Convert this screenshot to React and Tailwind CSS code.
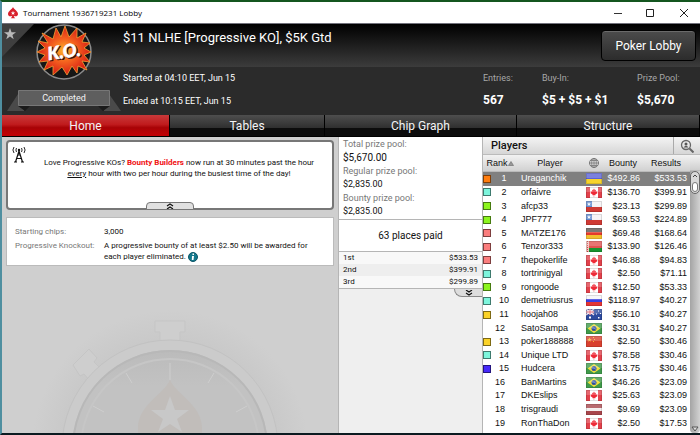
import React, { useState } from "react";

const tabs = ["Home", "Tables", "Chip Graph", "Structure"];

const payouts = [
  { place: "1st", prize: "$533.53" },
  { place: "2nd", prize: "$399.91" },
  { place: "3rd", prize: "$299.89" },
];

const pools = [
  { label: "Total prize pool:", value: "$5,670.00", size: "text-[10px]" },
  { label: "Regular prize pool:", value: "$2,835.00", size: "text-[9px]" },
  { label: "Bounty prize pool:", value: "$2,835.00", size: "text-[9px]" },
];

const players = [
  { name: "Uraganchik", flag: "ua", bounty: "$492.86", result: "$533.53", mark: "bg-[#ff7d0f]" },
  { name: "orfaivre", flag: "ca", bounty: "$136.70", result: "$399.91", mark: "bg-[#7df5dc]" },
  { name: "afcp33", flag: "cl", bounty: "$23.13", result: "$299.89", mark: "bg-[#8cf51e]" },
  { name: "JPF777", flag: "cl", bounty: "$69.53", result: "$224.89", mark: "bg-[#8cf51e]" },
  { name: "MATZE176", flag: "de", bounty: "$69.48", result: "$168.64", mark: "bg-[#fa7d7d]" },
  { name: "Tenzor333", flag: "by", bounty: "$133.90", result: "$126.46", mark: "bg-[#fa7d7d]" },
  { name: "thepokerlife", flag: "ca", bounty: "$46.88", result: "$94.83", mark: "bg-[#fa7d7d]" },
  { name: "tortrinigyal", flag: "ca", bounty: "$2.50", result: "$71.11", mark: "bg-[#7df5dc]" },
  { name: "rongoode", flag: "ca", bounty: "$12.50", result: "$53.33", mark: "bg-[#8cf51e]" },
  { name: "demetriusrus", flag: "ru", bounty: "$118.97", result: "$40.27", mark: "bg-[#7df5dc]" },
  { name: "hoojah08", flag: "au", bounty: "$56.10", result: "$40.27", mark: "bg-[#fad228]" },
  { name: "SatoSampa", flag: "br", bounty: "$30.31", result: "$40.27" },
  { name: "poker188888", flag: "cn", bounty: "$2.50", result: "$30.46", mark: "bg-[#fad228]" },
  { name: "Unique LTD", flag: "ca", bounty: "$78.58", result: "$30.46", mark: "bg-[#7df5dc]" },
  { name: "Hudcera", flag: "br", bounty: "$13.75", result: "$30.46", mark: "bg-[#4628fa]" },
  { name: "BanMartins", flag: "br", bounty: "$46.26", result: "$23.09" },
  { name: "DKEslips", flag: "ca", bounty: "$25.63", result: "$23.09" },
  { name: "trisgraudi", flag: "lv", bounty: "$9.69", result: "$23.09" },
  { name: "RonThaDon", flag: "ca", bounty: "$2.50", result: "$17.53" },
];

const flagShapes = {
  ua: (
    <>
      <path fill="#5b62d6" d="M0 0h16v6H0z" />
      <path fill="#f7d42c" d="M0 6h16v5H0z" />
    </>
  ),
  ca: (
    <>
      <path fill="#fff" d="M0 0h16v11H0z" />
      <path fill="#e2414b" d="M0 0h4v11H0zM12 0h4v11h-4z" />
      <path fill="#ee2b38" d="M8 1.500l1 1.600 1-.4-.2 1.800 1.700-.3-.4 1.200.6.6-2.400 1.500.2.700-1.300-.1V9.700h-.5V8.100l-1.300.1.2-.7L4.300 6l.6-.6-.4-1.200 1.700.3L6 2.700l1 .4z" />
    </>
  ),
  cl: (
    <>
      <path fill="#f4f2f4" d="M0 0h16v6H0z" />
      <path fill="#cf3a34" d="M0 6h16v5H0z" />
      <path fill="#5c86cc" d="M0 0h6v6H0z" />
      <path fill="#fff" d="M3 1l.5 1.400H5l-1.200.9.500 1.500L3 3.900l-1.300.9.500-1.500L1 2.400h1.500z" />
    </>
  ),
  de: (
    <>
      <path fill="#5d5753" d="M0 0h16v4H0z" />
      <path fill="#e43a2c" d="M0 4h16v3H0z" />
      <path fill="#f3bf2e" d="M0 7h16v4H0z" />
    </>
  ),
  by: (
    <>
      <path fill="#e25350" d="M0 0h16v7H0z" />
      <path fill="#17932f" d="M0 7h16v4H0z" />
      <path fill="#f0c4c0" d="M0 0h3v11H0z" />
      <path stroke="#d2433f" strokeDasharray="1 1" d="M1.500 0v11" />
    </>
  ),
  ru: (
    <>
      <path fill="#f6f6f8" d="M0 0h16v4H0z" />
      <path fill="#3a3fe0" d="M0 4h16v3H0z" />
      <path fill="#e33434" d="M0 7h16v4H0z" />
    </>
  ),
  au: (
    <>
      <path fill="#2c4a9e" d="M0 0h16v11H0z" />
      <path stroke="#f3dfe6" strokeWidth="1.500" d="M0 0l8 6M8 0L0 6M4 0v6M0 3h8" />
      <path stroke="#dd3c4a" strokeWidth=".8" d="M4 0v6M0 3h8" />
      <path fill="#fff" d="M3 7.500h2v2H3zM12 1.500h1v1h-1zM10 4.500h1v1h-1zM14 4h1v1h-1zM12 8h1.500v1.500H12z" />
    </>
  ),
  br: (
    <>
      <path fill="#3f9a4a" d="M0 0h16v11H0z" />
      <path fill="#f2df3a" d="M8 1l6.500 4.500L8 10 1.500 5.500z" />
      <circle cx="8" cy="5.500" r="2.500" fill="#2f4f9c" />
      <path stroke="#b8d0ee" strokeWidth=".6" fill="none" d="M5.700 5q2.500-.4 4.500 1.400" />
    </>
  ),
  cn: (
    <>
      <path fill="#d9402f" d="M0 0h16v11H0z" />
      <path fill="#f6b93a" d="M3.500 1.500l.6 1.600h1.700l-1.400 1 .5 1.600-1.400-1-1.400 1 .5-1.600-1.400-1h1.700zM7 1h1v1H7zM8 3h1v1H8zM7 5h1v1H7z" />
    </>
  ),
  lv: (
    <>
      <path fill="#a8454b" d="M0 0h16v11H0z" />
      <path fill="#f3eded" d="M0 4h16v3H0z" />
    </>
  ),
};

const Flag = ({ code }) => (
  <svg viewBox="0 0 16 11" className="mx-auto block h-[11px] w-4">
    {flagShapes[code]}
    <path fill="#fff" opacity=".2" d="M0 0h16v5H0z" />
    <path fill="none" stroke="#000" strokeOpacity=".12" d="M.5.5h15v10H.5z" />
  </svg>
);

const SpadeIcon = () => (
  <svg viewBox="0 0 12 12" className="h-3 w-3">
    <path fill="#d9202b" d="M6 0c1 2.600 5 4 5 7 0 2.200-2.600 3.100-4.200 1.700.1 1.300.7 2 1.600 2.600H3.600C4.500 10.700 5.100 10 5.200 8.700 3.600 10.100 1 9.200 1 7c0-3 4-4.400 5-7z" />
    <path fill="#fff" d="M6 3.800l.6 1.600h1.600l-1.300 1 .5 1.600L6 7l-1.400 1 .5-1.600-1.300-1h1.600z" />
  </svg>
);

const KoBadge = () => (
  <svg viewBox="0 0 56 56" className="block h-14 w-14" role="img" aria-label="K.O.">
    <defs>
      <radialGradient id="burst">
        <stop offset="0" stopColor="#ffb52a" />
        <stop offset=".45" stopColor="#f5651f" />
        <stop offset="1" stopColor="#d81e16" />
      </radialGradient>
    </defs>
    <circle cx="28" cy="28" r="27" fill="#161616" stroke="#8b8b8b" strokeWidth="1.500" />
    <path
      fill="url(#burst)"
      stroke="#f7a233"
      strokeWidth=".8"
      d="M20 4l5 9 4-11 4 11 8-9v10l9-5-4 9 8 1-6 5 7 4-7 3 6 7-8-1 5 9-9-4-1 7-5-7-5 9-5-8-9 8v-9l-9 4 4-9-9 1 6-7-8-3 8-4-7-7 10 2-6-10 11 6z"
    />
    <g transform="rotate(-8 28 28)" fontFamily="Lato, 'Open Sans', sans-serif" fontWeight="900" fontStyle="italic" fontSize="18">
      <text x="29" y="35" textAnchor="middle" fill="#3a0c08" stroke="#3a0c08">K.O.</text>
      <text x="28" y="34" textAnchor="middle" fill="#fff" stroke="#fff" strokeWidth=".6">K.O.</text>
    </g>
  </svg>
);

const StatusRibbon = () => (
  <div className="relative h-[22px] w-[114px]">
    <svg viewBox="0 0 114 22" className="absolute inset-0 h-full w-full">
      <path fill="#4a4a4a" d="M11 4L0 21h17V4zM102 4l12 17H97V4z" />
      <path fill="#1a1a1a" d="M11 16h12l-5 5zM103 16H91l5 5z" />
      <path fill="#5e5e5e" stroke="#777" d="M11.500.5h91v15h-91z" />
    </svg>
    <div className="relative text-center text-[9px] leading-4 text-zinc-100">Completed</div>
  </div>
);

const AntennaIcon = () => (
  <svg viewBox="0 0 14 17" className="h-[17px] w-[14px] shrink-0" fill="none" stroke="#111">
    <path strokeWidth="1.200" d="M7 5L3.500 16M7 5l3.500 11M4.500 12.500h5M5.500 9h3M2 16h3M9 16h3" />
    <circle cx="7" cy="4" r="1.200" fill="#111" stroke="none" />
    <path strokeWidth=".9" d="M4.500 2q-1.200 2 0 4M9.500 2q1.200 2 0 4M2 1q-2.200 3 0 6M12 1q2.200 3 0 6" />
  </svg>
);

const Stopwatch = () => (
  <svg viewBox="0 0 300 123" className="mx-auto mt-auto block w-[300px] shrink-0">
    <defs>
      <radialGradient id="halo" cx="150" cy="138" r="138" gradientUnits="userSpaceOnUse">
        <stop offset=".75" stopColor="#c8c8c8" />
        <stop offset="1" stopColor="#cfcfcf" />
      </radialGradient>
      <linearGradient id="face" x2="0" y2="1">
        <stop offset="0" stopColor="#bababa" />
        <stop offset=".2" stopColor="#c2c2c2" />
      </linearGradient>
    </defs>
    <circle cx="150" cy="138" r="138" fill="url(#halo)" />
    <path fill="#cecece" stroke="#c5c5c5" d="M135 11h30v11h-5v9h-20v-9h-5zM53 55l16-16 8 9-3 4 7 7-11 12-6-7-4 2z" />
    <circle cx="150" cy="138" r="103" fill="url(#face)" stroke="#cbcbcb" strokeWidth="10" />
    <circle cx="150" cy="138" r="108" fill="none" stroke="#c2c2c2" />
    <circle cx="150" cy="138" r="97" fill="none" stroke="#b8b8b8" strokeWidth="2" />
    <circle cx="150" cy="138" r="89" fill="none" stroke="#c6c6c6" strokeWidth="2" />
    <path stroke="#cecece" d="M150 53v17M106 63l6 10M194 63l-6 10M73 96l11 6M227 96l-11 6" />
    <path fill="#c1bdba" d="M150 70c6 14 32 25 32 48v5h-64v-5c0-23 26-34 32-48z" />
    <path fill="#c8c8c8" d="M150 86l5 14h14l-12 9 5 13-12-8-12 8 5-13-12-9h14z" />
  </svg>
);

const HandleArrows = ({ down }) => (
  <svg viewBox="0 0 8 6" className={`h-1.5 w-2 ${down ? "rotate-180" : ""}`} fill="none" stroke="#111" strokeWidth="1.200">
    <path d="M1 3l3-2 3 2M1 6l3-2 3 2" />
  </svg>
);

const TitleBar = () => (
  <div className="flex h-[21px] items-center bg-white pl-[5px] text-black">
    <SpadeIcon />
    <span className="ml-1 flex-1 font-['Open_Sans','Noto_Sans',sans-serif] text-[8px]">
      Tournament 1936719231 Lobby
    </span>
    <div className="flex gap-1">
      <button aria-label="Minimize" className="flex w-7 justify-center">
        <svg viewBox="0 0 8 8" className="h-2 w-2" stroke="#333"><path d="M0 4.500h8" /></svg>
      </button>
      <button aria-label="Maximize" className="flex w-7 justify-center">
        <svg viewBox="0 0 8 8" className="h-2 w-2" stroke="#222" fill="none"><path d="M.5.5h7v7h-7z" /></svg>
      </button>
      <button aria-label="Close" className="flex w-8 justify-center">
        <svg viewBox="0 0 8 8" className="h-2 w-2" stroke="#222"><path d="M0 0l8 8M8 0L0 8" /></svg>
      </button>
    </div>
  </div>
);

const Header = () => (
  <header className="flex h-[92px] border-t border-zinc-500 bg-[linear-gradient(#000_0px,#3c3c3c_43px,#2b2b2b_43px)] text-white">
    <div className="relative flex w-[120px] shrink-0 flex-col items-center pl-1">
      <svg viewBox="0 0 34 34" className="absolute top-0 left-0 h-[34px] w-[34px]">
        <path fill="#3f3f3f" d="M0 0h32L0 33z" />
        <path fill="#b9b9b9" d="M8 4l1.500 4.200H14l-3.600 2.700 1.300 4.300L8 12.600l-3.700 2.600 1.300-4.300L2 8.200h4.500z" />
      </svg>
      <div className="relative">
        <KoBadge />
      </div>
      <div className="mt-[10px]">
        <StatusRibbon />
      </div>
    </div>

    <div className="flex min-w-0 flex-1 flex-col pl-px">
      <div className="flex h-[43px] items-center justify-between pr-1">
        <h1 className="self-start pt-1 text-[13px] leading-5">$11 NLHE [Progressive KO], $5K Gtd</h1>
        <button className="h-[31px] w-[95px] rounded border border-black bg-linear-to-b from-[#4c4c4c] to-[#2c2c2c] text-[12px] shadow-[inset_0_1px_0_#6a6a6a]">
          Poker Lobby
        </button>
      </div>
      <div className="flex justify-between text-[9px] leading-[23px]">
        <div>
          <p>Started at 04:10 EET, Jun 15</p>
          <p>Ended at 10:15 EET, Jun 15</p>
        </div>
        <dl className="grid grid-cols-[59px_95px_63px]">
          <div>
            <dt className="text-[#a8a8a8]">Entries:</dt>
            <dd className="text-[12px] font-bold leading-[21px]">567</dd>
          </div>
          <div>
            <dt className="text-[#a8a8a8]">Buy-In:</dt>
            <dd className="text-[12px] font-bold leading-[21px]">$5 + $5 + $1</dd>
          </div>
          <div>
            <dt className="text-[#a8a8a8]">Prize Pool:</dt>
            <dd className="text-[12px] font-bold leading-[21px]">$5,670</dd>
          </div>
        </dl>
      </div>
    </div>
  </header>
);

const Tabs = () => {
  const [active, setActive] = useState("Home");

  return (
    <nav className="grid h-[22px] grid-cols-[168fr_155fr_192fr_183fr] border-b border-black bg-black">
      {tabs.map((tab) => (
        <button
          key={tab}
          onClick={() => setActive(tab)}
          className={`border-r border-black text-[12px] leading-5 text-zinc-100 ${
            tab === active
              ? "bg-[linear-gradient(#c8393a_0%,#c01b1d_45%,#a80306_60%,#c40004_100%)]"
              : "bg-[linear-gradient(#4e4e4e_0%,#303030_60%,#0c0c0c_62%,#0c0c0c_100%)]"
          }`}
        >
          {tab}
        </button>
      ))}
    </nav>
  );
};

const HomePanel = () => (
  <section className="flex min-h-0 flex-col overflow-hidden bg-[#cfcfcf] px-1 pt-[3px] text-[8px] leading-[11px]">
    {/* Announcement */}
    <div className="relative flex h-[70px] shrink-0 rounded border-2 border-[#777] bg-white pt-1 pl-1">
      <AntennaIcon />
      <p className="flex-1 pt-[11px] text-center">
        Love Progressive KOs?{" "}
        <a href="#bounty" className="font-bold text-[#f01010]">Bounty Builders</a> now run at 30 minutes past the hour
        <br />
        <u>every</u> hour with two per hour during the busiest time of the day!
      </p>
      <button
        aria-label="Collapse"
        className="absolute -bottom-0.5 left-1/2 flex h-2 w-12 -translate-x-1/2 items-center justify-center rounded-t border border-[#777] bg-[#e0e0e0]"
      >
        <HandleArrows />
      </button>
    </div>

    {/* Tournament details */}
    <dl className="mt-[7px] grid h-[49px] shrink-0 grid-cols-[89px_1fr] content-start gap-y-[3px] border border-[#bbb] bg-white pt-2 pl-2">
      <dt className="text-[#777]">Starting chips:</dt>
      <dd>3,000</dd>
      <dt className="text-[#777]">Progressive Knockout:</dt>
      <dd>
        A progressive bounty of at least $2.50 will be awarded for
        <br />
        each player eliminated.{" "}
        <svg viewBox="0 0 10 10" className="inline h-2.5 w-2.5">
          <circle cx="5" cy="5" r="4.500" fill="#14788c" stroke="#0d5566" />
          <path fill="#fff" d="M4.500 1.500h1.500v1.500H4.500zM4 4h2L5.500 8H3.800z" />
        </svg>
      </dd>
    </dl>
    <Stopwatch />
  </section>
);

const PrizePanel = () => (
  <section className="flex flex-col border-x border-[#b5b5b5] bg-[#efefef]">
    <dl className="border-b border-[#b5b5b5] bg-white pb-px pl-1">
      {pools.map((pool) => (
        <div key={pool.label}>
          <dt className="pt-px text-[9px] leading-[13px] text-[#777]">{pool.label}</dt>
          <dd className={`leading-[13px] ${pool.size}`}>{pool.value}</dd>
        </div>
      ))}
    </dl>
    <p className="border-b border-[#b5b5b5] bg-white text-center text-[10px] leading-[31px]">63 places paid</p>
    <table className="w-full border-b border-[#b5b5b5] text-[8px] leading-3">
      <tbody>
        {payouts.map((row) => (
          <tr key={row.place} className="bg-[#f8f8f8] even:bg-[#eee]">
            <th className="pl-1 text-left font-normal">{row.place}</th>
            <td className="pr-1 text-right">{row.prize}</td>
          </tr>
        ))}
      </tbody>
    </table>
    <button
      aria-label="Show all payouts"
      className="flex h-2 w-7 items-center justify-center self-end rounded-bl-lg border-b border-l border-[#888] bg-[#ddd]"
    >
      <HandleArrows down />
    </button>
  </section>
);

const PlayersPanel = () => (
  <section className="flex min-h-0 flex-col bg-white font-['Liberation_Sans',Arial,sans-serif]">
    <div className="flex h-[17px] shrink-0 items-stretch bg-linear-to-b from-[#f4f4f4] to-[#d6d6d6]">
      <h2 className="flex-1 pl-2 font-['Roboto',sans-serif] text-[11px] font-medium leading-[17px]">Players</h2>
      <button aria-label="Find player" className="flex w-[27px] items-center justify-center border-l border-[#aaa]">
        <svg viewBox="0 0 14 14" className="h-3.5 w-3.5" fill="none" stroke="#666">
          <circle cx="6" cy="6" r="4.500" strokeWidth="1.300" />
          <path strokeWidth="2" d="M9.500 9.500l4 4" />
          <circle cx="6" cy="5" r="1.500" fill="#555" stroke="none" />
          <path fill="#555" stroke="none" d="M3.500 8.500q2.500-3.500 5 0z" />
        </svg>
      </button>
    </div>
    <div className="flex min-h-0 flex-1">
      <div className="flex-1 pb-[3px]">
        <table className="h-full w-full table-fixed text-[9px] leading-[11px]">
          <colgroup>
            <col className="w-[34px]" />
            <col className="w-[66px]" />
            <col className="w-[21px]" />
            <col className="w-[38px]" />
            <col />
          </colgroup>
          <thead className="bg-linear-to-b from-[#f2f2f2] to-[#cfcfcf]">
            <tr className="h-[17px] border-y border-[#bbb] *:border-r *:border-[#bbb] *:font-normal last:*:border-r-0">
              <th>
                <span className="flex items-center justify-center">
                  Rank
                  <svg viewBox="0 0 6 5" className="h-[5px] w-1.5" fill="#999" stroke="#666" strokeWidth=".6">
                    <path d="M3 .5L5.500 4.500h-5z" />
                  </svg>
                </span>
              </th>
              <th>Player</th>
              <th>
                <svg viewBox="0 0 10 10" className="mx-auto h-2.5 w-2.5" fill="none" stroke="#777">
                  <circle cx="5" cy="5" r="4.500" />
                  <path strokeWidth=".8" d="M5 0v10M0 5h10M1.500 2.500h7M1.500 7.500h7" />
                  <ellipse cx="5" cy="5" rx="2.300" ry="4.500" strokeWidth=".8" />
                </svg>
              </th>
              <th>Bounty</th>
              <th>Results</th>
            </tr>
          </thead>
          <tbody>
            {players.map((player, i) => (
              <tr key={player.name} className="first:bg-[#808080] first:text-white">
                <td>
                  <div className="flex items-center">
                    {player.mark && <span className={`h-2 w-2 border border-black/50 ${player.mark}`}></span>}
                    <span className="flex-1 text-center">{i + 1}</span>
                  </div>
                </td>
                <td className="pl-1">{player.name}</td>
                <td>
                  <Flag code={player.flag} />
                </td>
                <td className="pr-0.5 text-right">{player.bounty}</td>
                <td className="pr-[3px] text-right">{player.result}</td>
              </tr>
            ))}
          </tbody>
        </table>
      </div>
      {/* Scrollbar */}
      <div className="flex w-[10px] flex-col">
        <div className="h-[17px] shrink-0 border-y border-[#bbb] bg-linear-to-b from-[#f2f2f2] to-[#cfcfcf]"></div>
        <div className="flex flex-1 flex-col justify-between rounded-b bg-linear-to-r from-[#a4a4a4] to-[#d2d2d2]">
          <div className="flex h-[23px] flex-col rounded-full border border-[#666] bg-[#d8d8d8] p-px">
            <svg viewBox="0 0 6 5" className="h-[5px] w-full" stroke="#444" fill="none"><path d="M1 4l2-2 2 2" /></svg>
            <span className="mt-1 flex-1 rounded-full border border-[#777] bg-white"></span>
          </div>
          <svg viewBox="0 0 8 8" className="h-2 w-full" stroke="#555" fill="#ddd"><path d="M1 2l3 4 3-4z" /></svg>
        </div>
      </div>
    </div>
  </section>
);

const App = () => {
  return (
    <div className="flex h-screen min-h-[435px] flex-col border-y-2 border-l-2 border-t-[#14561f] border-b-[#0b1a20] border-l-[#4f8fa0] bg-[#2b2b2b] font-['Roboto',sans-serif] text-[#111]">
      <TitleBar />
      <Header />
      <Tabs />
      <main className="grid min-h-0 flex-1 grid-cols-[336fr_145fr_217fr] bg-[#cfcfcf]">
        <HomePanel />
        <PrizePanel />
        <PlayersPanel />
      </main>
    </div>
  );
};

export default App;
